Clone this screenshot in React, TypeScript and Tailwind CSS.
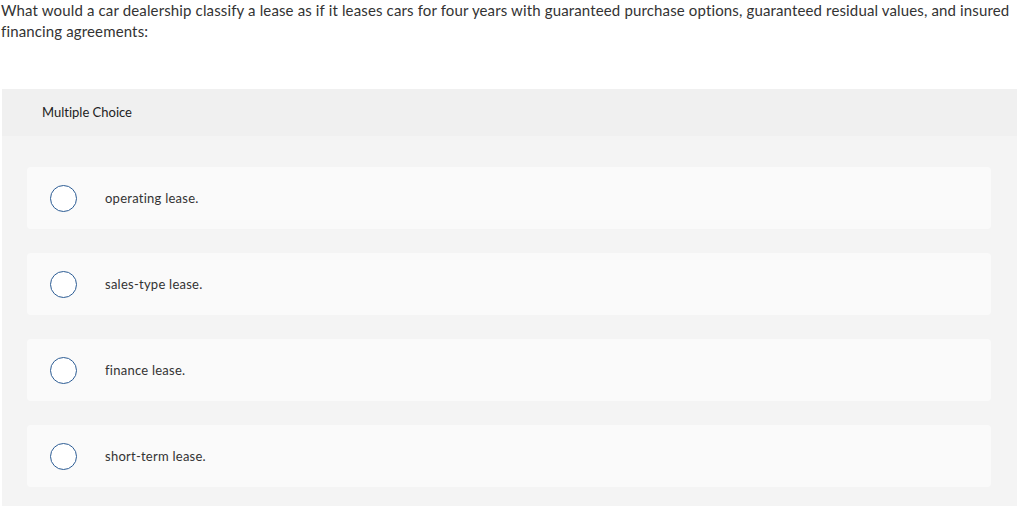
const options = [
  "operating lease.",
  "sales-type lease.",
  "finance lease.",
  "short-term lease.",
];

export default function App() {
  return (
    <main
      className="min-h-screen bg-white text-[#333] [font-variant-ligatures:none]"
      style={{ fontFamily: '"Lato", "Liberation Sans", sans-serif' }}
    >
      {/* QUESTION */}
      <p className="pl-px pr-2 text-[15px] leading-[21px] tracking-[0.14px]">
        What would a car dealership classify a lease as if it leases cars for four years with guaranteed purchase options, guaranteed residual values, and insured financing agreements:
      </p>

      {/* ANSWER PANEL */}
      <div className="ml-[2px] mr-[7px] mt-[47px] rounded-t-sm bg-[#f4f4f4]">
        <div className="h-[47px] flex items-center pl-10 bg-[#f0f0f0] text-[13px] text-[#222]">
          Multiple Choice
        </div>
        <div className="pt-[31px] pl-[25px] pr-[26px] pb-5 flex flex-col gap-[24px]">
          {options.map((opt) => (
            <div
              key={opt}
              className="h-[62px] rounded-sm bg-[#fafafa] flex items-center"
            >
              <span className="ml-[23px] w-[27px] h-[27px] rounded-full border border-[#2c5c94] bg-white shrink-0" />
              <span className="ml-[28px] pt-[2px] text-[13px] tracking-[0.25px] text-[#333]">{opt}</span>
            </div>
          ))}
        </div>
      </div>
    </main>
  );
}
